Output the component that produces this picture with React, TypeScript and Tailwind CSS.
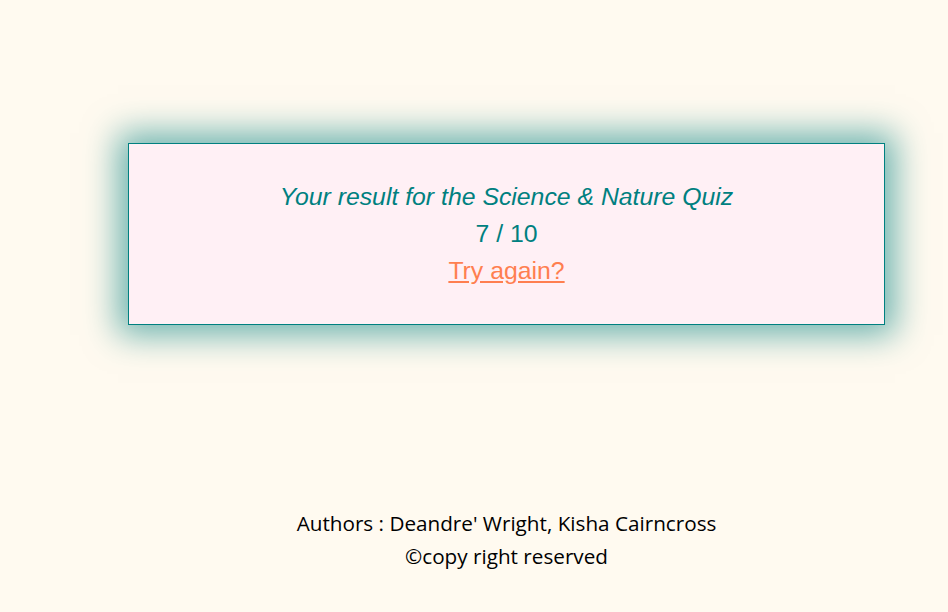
export default function App() {
  return (
    <div className="min-h-[612px] w-[948px] bg-[#fffaf0] pt-[143px]">
      <div className="ml-[128px] w-[757px]">
        <div className="flex h-[182px] flex-col items-center justify-center border border-[#008080] bg-[#fff0f5] pb-[2px] shadow-[0_0_32px_10px_#00808094]" style={{ fontFamily: '"Liberation Sans", Arial, sans-serif' }}>
          <p className="text-[24.8px] leading-[37px] italic text-[#008080]">Your result for the Science &amp; Nature Quiz</p>
          <p className="text-[24.8px] leading-[37px] text-[#008080]">7 / 10</p>
          <a href="#" className="text-[24.8px] leading-[37px] text-[#ff7f50] underline">Try again?</a>
        </div>
        <div className="mt-[182px] flex flex-col items-center text-[20.7px] leading-[33px] text-black" style={{ fontFamily: '"Open Sans", "Noto Sans", sans-serif' }}>
          <p>Authors : Deandre' Wright, Kisha Cairncross</p>
          <p>©copy right reserved</p>
        </div>
      </div>
    </div>
  );
}
